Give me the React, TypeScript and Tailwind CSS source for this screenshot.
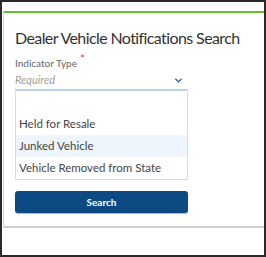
import { ChevronDown } from "lucide-react";

const options = [
  { label: "", active: false },
  { label: "Held for Resale", active: false },
  { label: "Junked Vehicle", active: true },
  { label: "Vehicle Removed from State", active: false },
];

export default function App() {
  return (
    <div className="w-[266px] h-[257px] border-2 border-[#2a2a2a] bg-white pt-[9px] pl-px font-['Lato',sans-serif]">
      {/* Card */}
      <div className="h-[217px] border-t-2 border-t-[#6abf2e] border-l border-l-[#d4d4d4] border-b-2 border-b-[#cfcfcf] pl-[11px] pt-[14px]">
        <h1 className="whitespace-nowrap text-[16px] leading-[22px] tracking-[-0.6px] text-[#333]">
          Dealer Vehicle Notifications Search
        </h1>

        <div className="mt-[7px] w-[173px]">
          <div className="text-[10px] leading-[14px] text-[#666]">
            Indicator Type
            <span className="relative -top-[4px] ml-[3px] text-[12px] text-[#e05050]">*</span>
          </div>
          <div className="flex items-center justify-between h-[20px] pr-[4px]">
            <span className="text-[11px] italic text-[#a0a0a0]">Required</span>
            <ChevronDown size={11} strokeWidth={3} className="text-[#1f4e8c]" />
          </div>

          {/* Dropdown list */}
          <div className="mt-[-1px] border border-[#dcdcdc] border-t-2 border-t-[#b8d4ec]">
            {options.map((o, i) => (
              <div
                key={i}
                className={`h-[22px] px-[3px] flex items-center text-[11.5px] text-[#444] ${
                  o.active ? "bg-[#eef5fc]" : "bg-white"
                }`}
              >
                {o.label}
              </div>
            ))}
          </div>

          <button className="mt-[11px] w-full h-[22px] rounded-[3px] bg-[#0b4a82] text-white text-[10px] font-bold shadow-[0_1px_1px_rgba(0,0,0,0.3)]">
            Search
          </button>
        </div>
      </div>
    </div>
  );
}
